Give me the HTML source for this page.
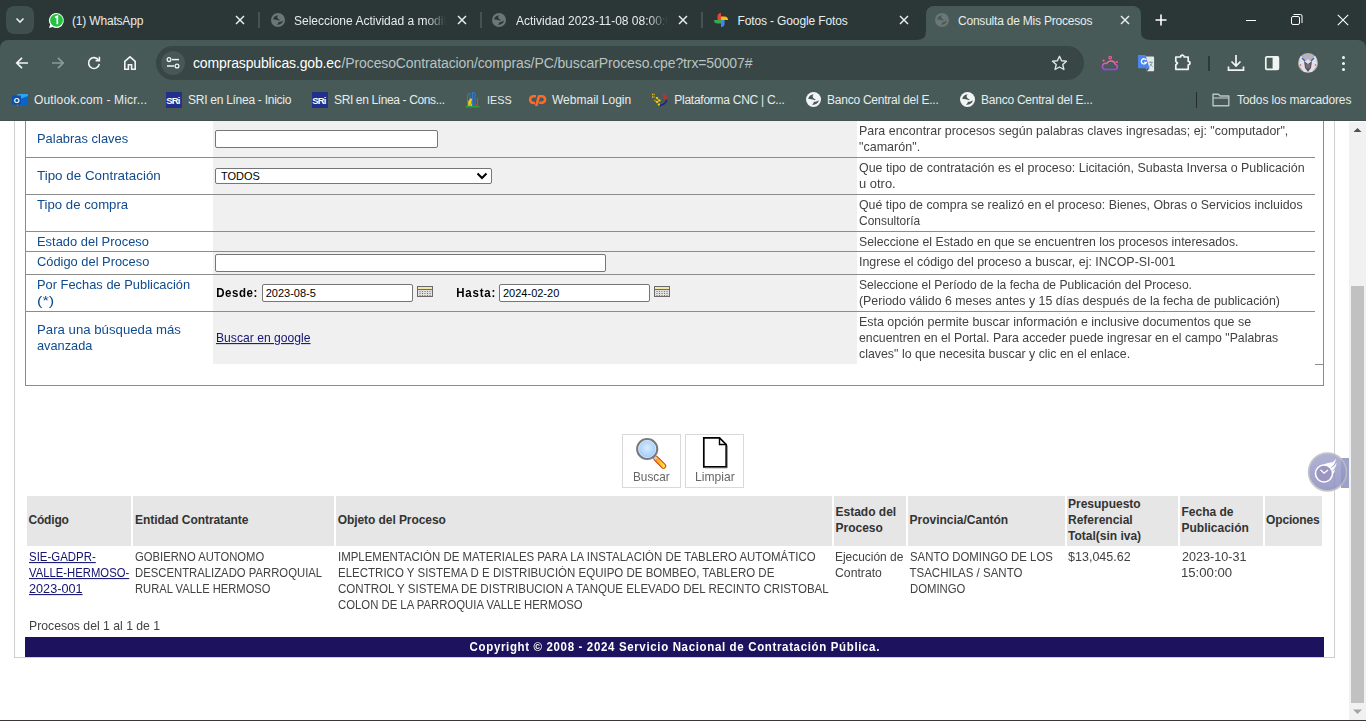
<!DOCTYPE html>
<html><head><meta charset="utf-8"><title>Consulta de Mis Procesos</title>
<style>

html,body{margin:0;padding:0;width:1366px;height:721px;overflow:hidden;background:#fff;}
body{position:relative;font-family:'Liberation Sans',sans-serif;}
.a{position:absolute;box-sizing:border-box;}
.t{position:absolute;white-space:nowrap;line-height:20px;font-family:'Liberation Sans',sans-serif;}
svg{position:absolute;overflow:visible;}

</style></head><body>
<div class="a" style="left:0px;top:0px;width:1366px;height:48px;background:#2b3736;"></div>
<div class="a" style="left:0px;top:40px;width:1366px;height:81px;background:#475a58;border-radius:8px 8px 0 0;"></div>
<div class="a" style="left:0px;top:120px;width:1366px;height:1px;background:#425250;"></div>
<div class="a" style="left:926px;top:6px;width:215px;height:40px;background:#475a58;border-radius:8px 8px 0 0;"></div>
<svg style="left:916px;top:32px" width="10" height="8"><path d="M0 8 Q10 8 10 0 L10 8 Z" fill="#475a58"/></svg>
<svg style="left:1141px;top:32px" width="10" height="8"><path d="M10 8 Q0 8 0 0 L0 8 Z" fill="#475a58"/></svg>
<div class="a" style="left:6px;top:6px;width:28px;height:28px;background:#3f4f4e;border-radius:8px;"></div>
<svg style="left:14px;top:14px" width="12" height="12"><path d="M2.5 4.5 L6 8 L9.5 4.5" stroke="#e8ecec" stroke-width="1.6" fill="none"/></svg>
<div class="a" style="left:258px;top:12px;width:2px;height:16px;background:#415451;"></div>
<div class="a" style="left:480px;top:12px;width:2px;height:16px;background:#415451;"></div>
<div class="a" style="left:701px;top:12px;width:2px;height:16px;background:#415451;"></div>
<svg style="left:235px;top:15px" width="10" height="10"><path d="M1 1 L9 9 M9 1 L1 9" stroke="#e8ecec" stroke-width="1.5" fill="none"/></svg>
<svg style="left:457px;top:15px" width="10" height="10"><path d="M1 1 L9 9 M9 1 L1 9" stroke="#e8ecec" stroke-width="1.5" fill="none"/></svg>
<svg style="left:678px;top:15px" width="10" height="10"><path d="M1 1 L9 9 M9 1 L1 9" stroke="#e8ecec" stroke-width="1.5" fill="none"/></svg>
<svg style="left:899px;top:15px" width="10" height="10"><path d="M1 1 L9 9 M9 1 L1 9" stroke="#e8ecec" stroke-width="1.5" fill="none"/></svg>
<svg style="left:1120px;top:15px" width="10" height="10"><path d="M1 1 L9 9 M9 1 L1 9" stroke="#e8ecec" stroke-width="1.5" fill="none"/></svg>
<svg style="left:271px;top:13px" width="14" height="14" viewBox="0 0 14 14"><circle cx="7" cy="7" r="7" fill="#6b7676"/><path d="M2.1 6.6 C2.4 4.2 4.3 2.4 7.3 2.2 C6.3 3 5.9 4.1 6.5 5.1 C7.1 6.1 8.3 6.6 9.2 7.4 C7.8 7.6 6.6 6.9 5.2 6.7 C4.2 6.6 3 6.6 2.1 6.6 Z" fill="#2b3736"/><path d="M5.6 11.9 C6.6 11.2 7.4 10.3 7.3 9.2 C8.8 9.3 10.3 8.6 11.9 7.6 C11.8 10 9.6 11.9 5.6 11.9 Z" fill="#2b3736"/></svg>
<svg style="left:492px;top:13px" width="14" height="14" viewBox="0 0 14 14"><circle cx="7" cy="7" r="7" fill="#6b7676"/><path d="M2.1 6.6 C2.4 4.2 4.3 2.4 7.3 2.2 C6.3 3 5.9 4.1 6.5 5.1 C7.1 6.1 8.3 6.6 9.2 7.4 C7.8 7.6 6.6 6.9 5.2 6.7 C4.2 6.6 3 6.6 2.1 6.6 Z" fill="#2b3736"/><path d="M5.6 11.9 C6.6 11.2 7.4 10.3 7.3 9.2 C8.8 9.3 10.3 8.6 11.9 7.6 C11.8 10 9.6 11.9 5.6 11.9 Z" fill="#2b3736"/></svg>
<svg style="left:935px;top:13px" width="14" height="14" viewBox="0 0 14 14"><circle cx="7" cy="7" r="7" fill="#6b7676"/><path d="M2.1 6.6 C2.4 4.2 4.3 2.4 7.3 2.2 C6.3 3 5.9 4.1 6.5 5.1 C7.1 6.1 8.3 6.6 9.2 7.4 C7.8 7.6 6.6 6.9 5.2 6.7 C4.2 6.6 3 6.6 2.1 6.6 Z" fill="#475a58"/><path d="M5.6 11.9 C6.6 11.2 7.4 10.3 7.3 9.2 C8.8 9.3 10.3 8.6 11.9 7.6 C11.8 10 9.6 11.9 5.6 11.9 Z" fill="#475a58"/></svg>
<svg style="left:48px;top:12px" width="17" height="17" viewBox="0 0 17 17"><path d="M8.5 1 A7.5 7.5 0 1 1 4.6 15 L1 16 L2.2 12.6 A7.5 7.5 0 0 1 8.5 1 Z" fill="#fff"/><circle cx="8.5" cy="8.3" r="6.4" fill="#25c03f"/><path d="M7 5.5 L9.3 4.3 L9.3 12.3" stroke="#fff" stroke-width="1.7" fill="none"/></svg>
<svg style="left:713px;top:12px" width="16" height="16" viewBox="0 0 16 16"><path d="M8 8 L8 1 A3.5 3.5 0 0 0 4.5 4.5 L4.5 8 Z" fill="#ea4335"/><path d="M8 8 L15 8 A3.5 3.5 0 0 0 11.5 4.5 L8 4.5 Z" fill="#fbbc04"/><path d="M8 8 L8 15 A3.5 3.5 0 0 0 11.5 11.5 L11.5 8 Z" fill="#4285f4"/><path d="M8 8 L1 8 A3.5 3.5 0 0 0 4.5 11.5 L8 11.5 Z" fill="#34a853"/></svg>
<svg style="left:1155px;top:14px" width="12" height="12"><path d="M6 0.5 V11.5 M0.5 6 H11.5" stroke="#ffffff" stroke-width="1.6"/></svg>
<div class="a" style="left:1246px;top:20px;width:10px;height:1px;background:#ffffff;"></div>
<svg style="left:1291px;top:14px" width="12" height="12"><rect x="0.5" y="2.5" width="8" height="8" rx="1.5" stroke="#fff" stroke-width="1" fill="none"/><path d="M2.5 0.5 H9.5 A1.5 1.5 0 0 1 11 2 V9" stroke="#fff" stroke-width="1" fill="none"/></svg>
<svg style="left:1337px;top:14px" width="12" height="12"><path d="M0.8 0.8 L11.2 11.2 M11.2 0.8 L0.8 11.2" stroke="#fff" stroke-width="1.1"/></svg>
<svg style="left:15px;top:56px" width="14" height="14"><path d="M13 7 H2 M7 1.8 L1.8 7 L7 12.2" stroke="#f2f4f4" stroke-width="1.7" fill="none"/></svg>
<svg style="left:51px;top:56px" width="14" height="14"><path d="M1 7 H12 M7 1.8 L12.2 7 L7 12.2" stroke="#8d9a99" stroke-width="1.7" fill="none"/></svg>
<svg style="left:87px;top:56px" width="14" height="14"><path d="M11.6 4.2 A5.4 5.4 0 1 0 12.3 8" stroke="#f2f4f4" stroke-width="1.6" fill="none"/><path d="M8.6 4.6 H12.4 V0.8" stroke="#f2f4f4" stroke-width="1.6" fill="none"/></svg>
<svg style="left:123px;top:55px" width="14" height="16"><path d="M1.8 14.2 V6.4 L7 1.9 L12.2 6.4 V14.2 H8.6 V9.8 H5.4 V14.2 Z" stroke="#f2f4f4" stroke-width="1.6" fill="none" stroke-linejoin="miter"/></svg>
<div class="a" style="left:156px;top:46px;width:928px;height:34px;background:#384645;border-radius:17px;"></div>
<div class="a" style="left:161px;top:51px;width:24px;height:24px;background:#475856;border-radius:12px;"></div>
<svg style="left:166px;top:57px" width="14" height="12"><circle cx="3" cy="2.6" r="1.9" stroke="#f2f4f4" stroke-width="1.3" fill="none"/><path d="M6 2.6 H13" stroke="#f2f4f4" stroke-width="1.5"/><circle cx="11" cy="9" r="1.9" stroke="#f2f4f4" stroke-width="1.3" fill="none"/><path d="M1 9 H8" stroke="#f2f4f4" stroke-width="1.5"/></svg>
<svg style="left:1051px;top:55px" width="17" height="16" viewBox="0 0 17 16"><path d="M8.5 1.3 L10.6 5.8 L15.5 6.3 L11.8 9.6 L12.9 14.5 L8.5 12 L4.1 14.5 L5.2 9.6 L1.5 6.3 L6.4 5.8 Z" stroke="#e0e6e5" stroke-width="1.4" fill="none" stroke-linejoin="round"/></svg>
<svg style="left:1100px;top:54px" width="20" height="18" viewBox="0 0 20 18"><defs><linearGradient id="wg" x1="0" y1="0" x2="0" y2="1"><stop offset="0" stop-color="#ff6a90"/><stop offset="1" stop-color="#9a40ff"/></linearGradient></defs><path d="M4.5 15.5 H14.8 A2.6 2.6 0 0 0 15.4 10.4 A4.8 4.8 0 0 0 6.6 9.6 A3 3 0 0 0 4.5 15.5 Z" stroke="url(#wg)" stroke-width="1.5" fill="none"/><circle cx="10.2" cy="3.6" r="1.3" stroke="#ff5aa0" stroke-width="1.1" fill="none"/><circle cx="3.6" cy="6.6" r="1.1" fill="#ff5aa0"/><circle cx="16.8" cy="8" r="1.1" fill="#ff5aa0"/></svg>
<svg style="left:1137px;top:54px" width="18" height="18" viewBox="0 0 18 18"><path d="M8 2.5 H16.3 A0.8 0.8 0 0 1 17.1 3.3 V16.5 A0.8 0.8 0 0 1 16.3 17.3 H10 Z" fill="#e6e8e8"/><path d="M1 1 H8.5 L12.5 14.2 H1.8 A0.8 0.8 0 0 1 1 13.4 Z" fill="#4a86ee"/><path d="M10 14.2 H12.5 L10 17.3 Z" fill="#2a4fb8"/><path d="M9.2 6 A2.6 2.6 0 1 0 9.4 8.3 H7.2" stroke="#fff" stroke-width="1.3" fill="none"/><path d="M11.8 8.3 H15.8 M13.8 7.3 V8.3 M12.3 12.8 C14 11.5 14.8 10 15 8.3 M13 9.8 C13.8 11 14.8 12 15.8 12.8" stroke="#6f8f9a" stroke-width="0.8" fill="none"/></svg>
<svg style="left:1174px;top:54px" width="18" height="18" viewBox="0 0 18 18"><path d="M1.8 3 H6.6 A1.8 1.8 0 0 1 10.2 3 H14.2 V7.3 A1.8 1.8 0 0 1 14.2 10.9 V15.3 H1.8 V10.9 L3.5 9.1 L1.8 7.3 Z" stroke="#f2f4f4" stroke-width="1.7" fill="none" stroke-linejoin="round"/></svg>
<div class="a" style="left:1208px;top:56px;width:2px;height:15px;background:#2e3a39;"></div>
<svg style="left:1227px;top:54px" width="18" height="18" viewBox="0 0 18 18"><path d="M9 1 V11.5 M4.5 7.5 L9 12 L13.5 7.5" stroke="#f2f4f4" stroke-width="1.7" fill="none"/><path d="M1.5 12.5 V16.2 H16.5 V12.5" stroke="#f2f4f4" stroke-width="1.7" fill="none"/></svg>
<svg style="left:1264px;top:55px" width="16" height="16" viewBox="0 0 16 16"><rect x="1.8" y="1.8" width="12.6" height="12.6" rx="1.2" stroke="#f2f4f4" stroke-width="1.7" fill="none"/><rect x="8.6" y="1.5" width="6" height="13" fill="#f2f4f4"/></svg>
<svg style="left:1298px;top:53px" width="20" height="20" viewBox="0 0 20 20"><defs><clipPath id="av"><circle cx="10" cy="10" r="10"/></clipPath></defs><g clip-path="url(#av)"><rect width="20" height="20" fill="#b9b2bc"/><path d="M2 2 L8 8 L10 6 L12 8 L18 2 L19 12 L14 19 H6 L1 12 Z" fill="#e6e0e6"/><path d="M6 8 L10 11 L14 8 L13 15 L10 19 L7 15 Z" fill="#5c5660"/><path d="M8 12 H12 M8 14 H12" stroke="#9a949c" stroke-width="0.8"/><path d="M4 5 L7 8" stroke="#2f6ec0" stroke-width="1.6"/><path d="M16 5 L13 8" stroke="#2f6ec0" stroke-width="1.6"/><circle cx="2.5" cy="12" r="0.8" fill="#c05050"/><circle cx="17.5" cy="12" r="0.8" fill="#c05050"/></g></svg>
<div class="a" style="left:1342px;top:56px;width:3px;height:3px;background:#f2f4f4;border-radius:2px;"></div>
<div class="a" style="left:1342px;top:62px;width:3px;height:3px;background:#f2f4f4;border-radius:2px;"></div>
<div class="a" style="left:1342px;top:68px;width:3px;height:3px;background:#f2f4f4;border-radius:2px;"></div>
<svg style="left:12px;top:92px" width="16" height="16" viewBox="0 0 16 16"><rect x="5" y="2" width="11" height="12" rx="1" fill="#28a8ea"/><path d="M5 8 L16 4 V14 H6 Z" fill="#0a64c8"/><rect x="0" y="3.5" width="9" height="9" rx="1" fill="#0f4fa8"/><text x="1.8" y="11" font-size="7.5" font-weight="700" font-family="Liberation Sans" fill="#fff">O</text></svg>
<svg style="left:166px;top:92px" width="16" height="16" viewBox="0 0 16 16"><rect width="16" height="16" fill="#23308a"/><text x="0.3" y="12" font-size="9.5" font-weight="700" font-family="Liberation Sans" fill="#fff" letter-spacing="-0.9">SRi</text></svg>
<svg style="left:312px;top:92px" width="16" height="16" viewBox="0 0 16 16"><rect width="16" height="16" fill="#23308a"/><text x="0.3" y="12" font-size="9.5" font-weight="700" font-family="Liberation Sans" fill="#fff" letter-spacing="-0.9">SRi</text></svg>
<svg style="left:465px;top:91px" width="15" height="17" viewBox="0 0 15 17"><path d="M2.5 15 V5 M5 15 V2.5 M7.5 15 V1.5 M10 15 V2.5 M12.5 15 V7" stroke="#2f7ee0" stroke-width="0.9" fill="none"/><path d="M2.5 5 Q2.5 1.5 5 2.5 M7.5 1.5 Q10 1.2 10 2.5" stroke="#2f7ee0" stroke-width="0.9" fill="none"/><path d="M4 15 V10.5 L6 9 L5.5 12 L6.5 15" stroke="#f2d010" stroke-width="1.6" fill="none"/><circle cx="5.5" cy="8.6" r="1" fill="#f2d010"/><path d="M8.5 15 V11 M10.5 15 V11.5" stroke="#2a60c0" stroke-width="1.3"/><path d="M9.5 13 L11 15 L12.5 13" fill="#e03030"/><path d="M0.5 15.8 H14.5" stroke="#22b030" stroke-width="1.2"/></svg>
<svg style="left:529px;top:93px" width="18" height="14" viewBox="0 0 18 14"><path d="M7 3.2 H4.5 A3.4 3.4 0 0 0 4.5 10 H6" stroke="#ff6a28" stroke-width="2.6" fill="none"/><path d="M7.2 13 L10 3.2 H12.8 A3.3 3.3 0 0 1 12.8 9.8 H10.2" stroke="#ff6a28" stroke-width="2.6" fill="none" stroke-linejoin="round"/></svg>
<svg style="left:651px;top:93px" width="17" height="14" viewBox="0 0 17 14"><path d="M1 1.5 H4 M1 4 H3.5 M5 4.5 L8 7 M3.5 7 L6.5 10 M6 9.5 L9 7 M7 12 L8.5 10.5" stroke="#e8c010" stroke-width="1.4" stroke-dasharray="1 0.6"/><circle cx="6" cy="5" r="1.1" fill="#f2cc10"/><circle cx="8.5" cy="7.5" r="1.1" fill="#f2cc10"/><circle cx="6" cy="8.8" r="1.1" fill="#f2cc10"/><circle cx="8" cy="11.5" r="1.1" fill="#f2cc10"/><path d="M11.5 1.5 C14 1 16 2.5 15.6 5 C15.3 6.5 14 7.2 13 7.4 C14 6 13.5 4 12 3.5 Z" fill="#d42a20"/><path d="M9 12.5 C12 12 15 9.5 15.8 6.8" stroke="#1c2a78" stroke-width="1.8" fill="none"/></svg>
<svg style="left:806px;top:92px" width="15" height="15" viewBox="0 0 14 14"><circle cx="7" cy="7" r="7" fill="#f2f4f4"/><path d="M2.1 6.6 C2.4 4.2 4.3 2.4 7.3 2.2 C6.3 3 5.9 4.1 6.5 5.1 C7.1 6.1 8.3 6.6 9.2 7.4 C7.8 7.6 6.6 6.9 5.2 6.7 C4.2 6.6 3 6.6 2.1 6.6 Z" fill="#475a58"/><path d="M5.6 11.9 C6.6 11.2 7.4 10.3 7.3 9.2 C8.8 9.3 10.3 8.6 11.9 7.6 C11.8 10 9.6 11.9 5.6 11.9 Z" fill="#475a58"/></svg>
<svg style="left:960px;top:92px" width="15" height="15" viewBox="0 0 14 14"><circle cx="7" cy="7" r="7" fill="#f2f4f4"/><path d="M2.1 6.6 C2.4 4.2 4.3 2.4 7.3 2.2 C6.3 3 5.9 4.1 6.5 5.1 C7.1 6.1 8.3 6.6 9.2 7.4 C7.8 7.6 6.6 6.9 5.2 6.7 C4.2 6.6 3 6.6 2.1 6.6 Z" fill="#475a58"/><path d="M5.6 11.9 C6.6 11.2 7.4 10.3 7.3 9.2 C8.8 9.3 10.3 8.6 11.9 7.6 C11.8 10 9.6 11.9 5.6 11.9 Z" fill="#475a58"/></svg>
<div class="a" style="left:1196px;top:92px;width:1px;height:16px;background:#222c2b;"></div>
<svg style="left:1212px;top:93px" width="18" height="14" viewBox="0 0 18 14"><path d="M1 1.2 H6.5 L8.2 3 H16.8 V12.8 H1 Z" stroke="#b9c3c2" stroke-width="1.4" fill="none" stroke-linejoin="round"/><path d="M1 5 H16.8" stroke="#b9c3c2" stroke-width="1.2"/></svg>
<div class="a" style="left:14px;top:121px;width:1px;height:537px;background:#cfcfcf;"></div>
<div class="a" style="left:1334px;top:121px;width:1px;height:537px;background:#cfcfcf;"></div>
<div class="a" style="left:14px;top:657px;width:1321px;height:1px;background:#cfcfcf;"></div>
<div class="a" style="left:25px;top:121px;width:1px;height:265px;background:#8c8c8c;"></div>
<div class="a" style="left:1323px;top:121px;width:1px;height:265px;background:#8c8c8c;"></div>
<div class="a" style="left:25px;top:385px;width:1299px;height:1px;background:#8c8c8c;"></div>
<div class="a" style="left:213px;top:121px;width:644px;height:243px;background:#f0f0f0;"></div>
<div class="a" style="left:25px;top:157px;width:1290px;height:1px;background:#8c8c8c;"></div>
<div class="a" style="left:25px;top:194px;width:1290px;height:1px;background:#8c8c8c;"></div>
<div class="a" style="left:25px;top:231px;width:1290px;height:1px;background:#8c8c8c;"></div>
<div class="a" style="left:25px;top:251px;width:1290px;height:1px;background:#8c8c8c;"></div>
<div class="a" style="left:25px;top:274px;width:1290px;height:1px;background:#8c8c8c;"></div>
<div class="a" style="left:25px;top:311px;width:1290px;height:1px;background:#8c8c8c;"></div>
<div class="a" style="left:1315px;top:364px;width:8px;height:1px;background:#8c8c8c;"></div>
<div class="a" style="left:215px;top:130px;width:223px;height:18px;background:#fff;border:1px solid #767676;border-radius:2px;"></div>
<div class="a" style="left:215px;top:168px;width:277px;height:16px;background:#fff;border:1px solid #767676;border-radius:2px;"></div>
<svg style="left:476px;top:172px" width="12" height="8"><path d="M1.5 1.5 L6 6 L10.5 1.5" stroke="#000" stroke-width="2" fill="none"/></svg>
<div class="a" style="left:215px;top:254px;width:391px;height:18px;background:#fff;border:1px solid #767676;border-radius:2px;"></div>
<div class="a" style="left:262px;top:284px;width:151px;height:18px;background:#fff;border:1px solid #767676;border-radius:2px;"></div>
<div class="a" style="left:499px;top:284px;width:151px;height:18px;background:#fff;border:1px solid #767676;border-radius:2px;"></div>
<svg style="left:417px;top:286px" width="16" height="11" viewBox="0 0 16 11"><rect x="0.5" y="0.5" width="15" height="10" fill="#e0e0e0" stroke="#6a6a6a"/><rect x="1" y="1" width="14" height="2" fill="#f3e7a8"/><path d="M1 3.5 H15" stroke="#6a6a6a"/><path d="M3 5 V10 M5.5 5 V10 M8 5 V10 M10.5 5 V10" stroke="#777" stroke-width="1" stroke-dasharray="1 1"/><path d="M13 5 V10" stroke="#d04040" stroke-dasharray="1 1"/></svg>
<svg style="left:654px;top:286px" width="16" height="11" viewBox="0 0 16 11"><rect x="0.5" y="0.5" width="15" height="10" fill="#e0e0e0" stroke="#6a6a6a"/><rect x="1" y="1" width="14" height="2" fill="#f3e7a8"/><path d="M1 3.5 H15" stroke="#6a6a6a"/><path d="M3 5 V10 M5.5 5 V10 M8 5 V10 M10.5 5 V10" stroke="#777" stroke-width="1" stroke-dasharray="1 1"/><path d="M13 5 V10" stroke="#d04040" stroke-dasharray="1 1"/></svg>
<div class="a" style="left:622px;top:434px;width:59px;height:54px;background:#fff;border:1px solid #d9d9d9;"></div>
<div class="a" style="left:685px;top:434px;width:59px;height:54px;background:#fff;border:1px solid #d9d9d9;"></div>
<svg style="left:634px;top:436px" width="34" height="34" viewBox="0 0 34 34"><defs><radialGradient id="lg" cx="0.5" cy="0.45" r="0.6"><stop offset="0" stop-color="#d8ecff"/><stop offset="0.7" stop-color="#a8d0fa"/><stop offset="1" stop-color="#5a9aee"/></radialGradient><linearGradient id="hg" x1="0" y1="0" x2="1" y2="0"><stop offset="0" stop-color="#ff9a10"/><stop offset="1" stop-color="#ffe040"/></linearGradient></defs><path d="M22 22.5 L29.5 30" stroke="#d03a10" stroke-width="5.4" stroke-linecap="round"/><path d="M22 22.5 L29.5 30" stroke="url(#hg)" stroke-width="3.6" stroke-linecap="round"/><path d="M20.5 21 L22.5 23" stroke="#c8d0d8" stroke-width="3"/><circle cx="13.2" cy="13" r="10" fill="url(#lg)" stroke="#7a7a7a" stroke-width="2.2"/><circle cx="13.2" cy="13" r="8.6" fill="none" stroke="#e8f0ff" stroke-width="0.7"/></svg>
<svg style="left:702px;top:436px" width="28" height="34" viewBox="0 0 28 34"><path d="M1.8 1.8 H17.5 L24.2 8.5 V30.8 H1.8 Z" fill="#fff" stroke="#000" stroke-width="1.7" stroke-linejoin="miter"/><path d="M17.5 1.8 V8.5 H24.2" fill="none" stroke="#000" stroke-width="1.4"/><path d="M2.8 31.8 H25.2 V9.5" stroke="#666" stroke-width="0.9" fill="none"/></svg>
<div class="a" style="left:27px;top:496px;width:104px;height:50px;background:#e6e6e6;"></div>
<div class="a" style="left:133px;top:496px;width:201px;height:50px;background:#e6e6e6;"></div>
<div class="a" style="left:336px;top:496px;width:496px;height:50px;background:#e6e6e6;"></div>
<div class="a" style="left:834px;top:496px;width:72px;height:50px;background:#e6e6e6;"></div>
<div class="a" style="left:908px;top:496px;width:157px;height:50px;background:#e6e6e6;"></div>
<div class="a" style="left:1067px;top:496px;width:111px;height:50px;background:#e6e6e6;"></div>
<div class="a" style="left:1180px;top:496px;width:83px;height:50px;background:#e6e6e6;"></div>
<div class="a" style="left:1265px;top:496px;width:57px;height:50px;background:#e6e6e6;"></div>
<div class="a" style="left:25px;top:637px;width:1299px;height:20px;background:#1d125e;"></div>
<div class="a" style="left:1341px;top:458px;width:8px;height:30px;background:#9497c4;opacity:0.9;"></div>
<svg style="left:1307px;top:452px;opacity:0.85" width="40" height="40" viewBox="0 0 40 40"><defs><linearGradient id="cg" x1="0" y1="0" x2="0" y2="1"><stop offset="0" stop-color="#a4a6cc"/><stop offset="1" stop-color="#8a8dc0"/></linearGradient></defs><circle cx="20.5" cy="20" r="19" fill="url(#cg)" stroke="#bdbdbd" stroke-width="1.6"/><circle cx="17" cy="21.5" r="8.5" fill="#8a84b4" stroke="#fff" stroke-width="1.5"/><path d="M13.5 17.8 L17 21.2 L21 18" stroke="#fff" stroke-width="1.3" fill="none"/><path d="M16.5 12.5 C20 10.5 23 11.5 26 9.5 C24.5 12.5 22 13.5 19 14 Z" fill="#fff"/><path d="M21 13.5 C24.5 12 27 10 28.5 6.5 C29 10.5 27 13.5 23.5 15.5 Z" fill="#fff"/><path d="M24 16 C26.5 15 28.5 13 29.5 10.5 C29.5 14 28 16.5 25.5 18.5 Z" fill="#fff"/><path d="M25 19.5 C26.5 19 27.5 18 28 16.5 C28 19 27 21 25.5 22.5 Z" fill="#fff"/></svg>
<div class="a" style="left:1349px;top:122px;width:17px;height:598px;background:#f1f1f1;"></div>
<div class="a" style="left:1351px;top:286px;width:13px;height:417px;background:#c1c1c1;"></div>
<svg style="left:1353px;top:127px" width="9" height="6"><path d="M0.5 5 L4.5 1 L8.5 5 Z" fill="#505050"/></svg>
<svg style="left:1353px;top:709px" width="9" height="6"><path d="M0 0.5 L4.5 5 L9 0.5 Z" fill="#a3a3a3"/></svg>
<div class="a" style="left:0px;top:720px;width:1366px;height:1px;background:#3b3535;"></div>
<div class="t" style="left:72px;top:11px;font-size:12px;font-weight:400;color:#e8ecec;letter-spacing:-0.182px;">(1) WhatsApp</div>
<div class="t" style="left:294px;top:11px;font-size:12px;font-weight:400;color:#e8ecec;width:152px;overflow:hidden;-webkit-mask-image:linear-gradient(90deg,#000 132px,transparent 152px);">Seleccione Actividad a modificar</div>
<div class="t" style="left:516px;top:11px;font-size:12px;font-weight:400;color:#e8ecec;width:152px;overflow:hidden;-webkit-mask-image:linear-gradient(90deg,#000 132px,transparent 152px);">Actividad 2023-11-08 08:00:00</div>
<div class="t" style="left:737.5px;top:11px;font-size:12px;font-weight:400;color:#e8ecec;letter-spacing:-0.132px;">Fotos - Google Fotos</div>
<div class="t" style="left:958px;top:11px;font-size:12px;font-weight:400;color:#e8ecec;letter-spacing:-0.217px;">Consulta de Mis Procesos</div>
<div class="t" style="left:193px;top:53px;font-size:14px;font-weight:400;color:#ffffff;letter-spacing:-0.143px;">compraspublicas.gob.ec</div>
<div class="t" style="left:341.5px;top:53px;font-size:14px;font-weight:400;color:#b9c3c2;letter-spacing:-0.11px;">/ProcesoContratacion/compras/PC/buscarProceso.cpe?trx=50007#</div>
<div class="t" style="left:34px;top:90px;font-size:12px;font-weight:400;color:#e8ecec;letter-spacing:0.15px;">Outlook.com - Micr...</div>
<div class="t" style="left:188px;top:90px;font-size:12px;font-weight:400;color:#e8ecec;letter-spacing:-0.27px;">SRI en Línea - Inicio</div>
<div class="t" style="left:334px;top:90px;font-size:12px;font-weight:400;color:#e8ecec;letter-spacing:-0.367px;">SRI en Línea - Cons...</div>
<div class="t" style="left:487px;top:90px;font-size:10.8px;font-weight:400;color:#e8ecec;">IESS</div>
<div class="t" style="left:552px;top:90px;font-size:12px;font-weight:400;color:#e8ecec;">Webmail Login</div>
<div class="t" style="left:674.3px;top:90px;font-size:12px;font-weight:400;color:#e8ecec;letter-spacing:-0.265px;">Plataforma CNC | C...</div>
<div class="t" style="left:827px;top:90px;font-size:12px;font-weight:400;color:#e8ecec;letter-spacing:-0.238px;">Banco Central del E...</div>
<div class="t" style="left:981px;top:90px;font-size:12px;font-weight:400;color:#e8ecec;letter-spacing:-0.238px;">Banco Central del E...</div>
<div class="t" style="left:1237px;top:90px;font-size:12px;font-weight:400;color:#e8ecec;letter-spacing:-0.158px;">Todos los marcadores</div>
<div class="t" style="left:37px;top:129px;font-size:11.5px;font-weight:400;color:#0f4b8f;transform:scale(1.1235,1.06);transform-origin:0 14px;">Palabras claves</div>
<div class="t" style="left:37px;top:166px;font-size:11.5px;font-weight:400;color:#0f4b8f;transform:scale(1.1642,1.06);transform-origin:0 14px;">Tipo de Contratación</div>
<div class="t" style="left:37px;top:194.5px;font-size:11.5px;font-weight:400;color:#0f4b8f;transform:scale(1.1475,1.06);transform-origin:0 14px;">Tipo de compra</div>
<div class="t" style="left:37px;top:231.5px;font-size:11.5px;font-weight:400;color:#0f4b8f;transform:scale(1.123,1.06);transform-origin:0 14px;">Estado del Proceso</div>
<div class="t" style="left:37px;top:252px;font-size:11.5px;font-weight:400;color:#0f4b8f;transform:scale(1.1188,1.06);transform-origin:0 14px;">Código del Proceso</div>
<div class="t" style="left:37px;top:275px;font-size:11.5px;font-weight:400;color:#0f4b8f;transform:scale(1.119,1.06);transform-origin:0 14px;">Por Fechas de Publicación</div>
<div class="t" style="left:37px;top:291px;font-size:11.5px;font-weight:400;color:#0f4b8f;transform:scale(1.4167,1.06);transform-origin:0 14px;">(*)</div>
<div class="t" style="left:37px;top:320px;font-size:11.5px;font-weight:400;color:#0f4b8f;transform:scale(1.148,1.06);transform-origin:0 14px;">Para una búsqueda más</div>
<div class="t" style="left:37px;top:336px;font-size:11.5px;font-weight:400;color:#0f4b8f;transform:scale(1.112,1.06);transform-origin:0 14px;">avanzada</div>
<div class="t" style="left:859px;top:121px;font-size:11.5px;font-weight:400;color:#424242;transform:scale(1.0819,1.06);transform-origin:0 14px;">Para encontrar procesos según palabras claves ingresadas; ej: &quot;computador&quot;,</div>
<div class="t" style="left:859px;top:137px;font-size:11.5px;font-weight:400;color:#424242;transform:scale(1.0893,1.06);transform-origin:0 14px;">&quot;camarón&quot;.</div>
<div class="t" style="left:859px;top:158px;font-size:11.5px;font-weight:400;color:#424242;transform:scale(1.0808,1.06);transform-origin:0 14px;">Que tipo de contratación es el proceso: Licitación, Subasta Inversa o Publicación</div>
<div class="t" style="left:859px;top:174px;font-size:11.5px;font-weight:400;color:#424242;transform:scale(1.125,1.06);transform-origin:0 14px;">u otro.</div>
<div class="t" style="left:859px;top:195px;font-size:11.5px;font-weight:400;color:#424242;transform:scale(1.076,1.06);transform-origin:0 14px;">Qué tipo de compra se realizó en el proceso: Bienes, Obras o Servicios incluidos</div>
<div class="t" style="left:859px;top:211px;font-size:11.5px;font-weight:400;color:#424242;transform:scale(1.039,1.06);transform-origin:0 14px;">Consultoría</div>
<div class="t" style="left:859px;top:231.5px;font-size:11.5px;font-weight:400;color:#424242;transform:scale(1.0676,1.06);transform-origin:0 14px;">Seleccione el Estado en que se encuentren los procesos interesados.</div>
<div class="t" style="left:859px;top:252px;font-size:11.5px;font-weight:400;color:#424242;transform:scale(1.0808,1.06);transform-origin:0 14px;">Ingrese el código del proceso a buscar, ej: INCOP-SI-001</div>
<div class="t" style="left:859px;top:275px;font-size:11.5px;font-weight:400;color:#424242;transform:scale(1.0522,1.06);transform-origin:0 14px;">Seleccione el Período de la fecha de Publicación del Proceso.</div>
<div class="t" style="left:859px;top:291px;font-size:11.5px;font-weight:400;color:#424242;transform:scale(1.076,1.06);transform-origin:0 14px;">(Periodo válido 6 meses antes y 15 días después de la fecha de publicación)</div>
<div class="t" style="left:859px;top:312px;font-size:11.5px;font-weight:400;color:#424242;transform:scale(1.0818,1.06);transform-origin:0 14px;">Esta opción permite buscar información e inclusive documentos que se</div>
<div class="t" style="left:859px;top:328px;font-size:11.5px;font-weight:400;color:#424242;transform:scale(1.0689,1.06);transform-origin:0 14px;">encuentren en el Portal. Para acceder puede ingresar en el campo &quot;Palabras</div>
<div class="t" style="left:859px;top:344px;font-size:11.5px;font-weight:400;color:#424242;transform:scale(1.0754,1.06);transform-origin:0 14px;">claves&quot; lo que necesita buscar y clic en el enlace.</div>
<div class="t" style="left:216.2px;top:283px;font-size:11.5px;font-weight:700;color:#000;letter-spacing:0.56px;transform:scale(1,1.06);transform-origin:0 14px;">Desde:</div>
<div class="t" style="left:456.2px;top:283px;font-size:11.5px;font-weight:700;color:#000;letter-spacing:0.8px;transform:scale(1,1.06);transform-origin:0 14px;">Hasta:</div>
<div class="t" style="left:265.7px;top:283px;font-size:11px;font-weight:400;color:#000;">2023-08-5</div>
<div class="t" style="left:503px;top:283px;font-size:11px;font-weight:400;color:#000;">2024-02-20</div>
<div class="t" style="left:220.9px;top:166px;font-size:11px;font-weight:400;color:#000;">TODOS</div>
<div class="t" style="left:216px;top:328px;font-size:11.5px;font-weight:400;color:#141472;transform:scale(1.0562,1.06);transform-origin:0 14px;text-decoration:underline;">Buscar en google</div>
<div class="t" style="left:633.4px;top:466.5px;font-size:11.5px;font-weight:400;color:#666;transform:scale(1.0222,1.06);transform-origin:0 14px;">Buscar</div>
<div class="t" style="left:694.5px;top:466.5px;font-size:11.5px;font-weight:400;color:#666;transform:scale(1.0526,1.06);transform-origin:0 14px;">Limpiar</div>
<div class="t" style="left:28.4px;top:510px;font-size:12px;font-weight:700;color:#333333;letter-spacing:-0.16px;">Código</div>
<div class="t" style="left:135.1px;top:510px;font-size:12px;font-weight:700;color:#333333;letter-spacing:-0.072px;">Entidad Contratante</div>
<div class="t" style="left:337.7px;top:510px;font-size:12px;font-weight:700;color:#333333;letter-spacing:-0.071px;">Objeto del Proceso</div>
<div class="t" style="left:835.5px;top:502px;font-size:12px;font-weight:700;color:#333333;">Estado del</div>
<div class="t" style="left:835.5px;top:518px;font-size:12px;font-weight:700;color:#333333;">Proceso</div>
<div class="t" style="left:909.5px;top:510px;font-size:12px;font-weight:700;color:#333333;">Provincia/Cantón</div>
<div class="t" style="left:1068px;top:494px;font-size:12px;font-weight:700;color:#333333;">Presupuesto</div>
<div class="t" style="left:1068px;top:510px;font-size:12px;font-weight:700;color:#333333;">Referencial</div>
<div class="t" style="left:1068px;top:526px;font-size:12px;font-weight:700;color:#333333;">Total(sin iva)</div>
<div class="t" style="left:1181.5px;top:502px;font-size:12px;font-weight:700;color:#333333;">Fecha de</div>
<div class="t" style="left:1181.5px;top:518px;font-size:12px;font-weight:700;color:#333333;">Publicación</div>
<div class="t" style="left:1266px;top:510px;font-size:12px;font-weight:700;color:#333333;letter-spacing:-0.143px;">Opciones</div>
<div class="t" style="left:28.7px;top:547px;font-size:11.5px;font-weight:400;color:#141472;transform:scale(0.9955,1.06);transform-origin:0 14px;text-decoration:underline;">SIE-GADPR-</div>
<div class="t" style="left:28.7px;top:563px;font-size:11.5px;font-weight:400;color:#141472;transform:scale(0.9824,1.06);transform-origin:0 14px;text-decoration:underline;">VALLE-HERMOSO-</div>
<div class="t" style="left:28.7px;top:579px;font-size:11.5px;font-weight:400;color:#141472;transform:scale(1.1021,1.06);transform-origin:0 14px;text-decoration:underline;">2023-001</div>
<div class="t" style="left:134.8px;top:547px;font-size:11.5px;font-weight:400;color:#424242;transform:scale(0.9788,1.06);transform-origin:0 14px;">GOBIERNO AUTONOMO</div>
<div class="t" style="left:134.8px;top:563px;font-size:11.5px;font-weight:400;color:#424242;transform:scale(0.9837,1.06);transform-origin:0 14px;">DESCENTRALIZADO PARROQUIAL</div>
<div class="t" style="left:134.8px;top:579px;font-size:11.5px;font-weight:400;color:#424242;transform:scale(0.9727,1.06);transform-origin:0 14px;">RURAL VALLE HERMOSO</div>
<div class="t" style="left:337.5px;top:547px;font-size:11.5px;font-weight:400;color:#424242;transform:scale(0.9956,1.06);transform-origin:0 14px;">IMPLEMENTACIÓN DE MATERIALES PARA LA INSTALACIÓN DE TABLERO AUTOMÁTICO</div>
<div class="t" style="left:337.5px;top:563px;font-size:11.5px;font-weight:400;color:#424242;transform:scale(1.0002,1.06);transform-origin:0 14px;">ELECTRICO Y SISTEMA D E DISTRIBUCIÓN EQUIPO DE BOMBEO, TABLERO DE</div>
<div class="t" style="left:337.5px;top:579px;font-size:11.5px;font-weight:400;color:#424242;transform:scale(1.0047,1.06);transform-origin:0 14px;">CONTROL Y SISTEMA DE DISTRIBUCION A TANQUE ELEVADO DEL RECINTO CRISTOBAL</div>
<div class="t" style="left:337.5px;top:595px;font-size:11.5px;font-weight:400;color:#424242;transform:scale(0.9859,1.06);transform-origin:0 14px;">COLON DE LA PARROQUIA VALLE HERMOSO</div>
<div class="t" style="left:835.2px;top:547px;font-size:11.5px;font-weight:400;color:#424242;transform:scale(1.0379,1.06);transform-origin:0 14px;">Ejecución de</div>
<div class="t" style="left:835.2px;top:563px;font-size:11.5px;font-weight:400;color:#424242;transform:scale(1.0636,1.06);transform-origin:0 14px;">Contrato</div>
<div class="t" style="left:909.5px;top:547px;font-size:11.5px;font-weight:400;color:#424242;transform:scale(0.991,1.06);transform-origin:0 14px;">SANTO DOMINGO DE LOS</div>
<div class="t" style="left:909.5px;top:563px;font-size:11.5px;font-weight:400;color:#424242;transform:scale(1.0,1.06);transform-origin:0 14px;">TSACHILAS / SANTO</div>
<div class="t" style="left:909.5px;top:579px;font-size:11.5px;font-weight:400;color:#424242;transform:scale(0.9857,1.06);transform-origin:0 14px;">DOMINGO</div>
<div class="t" style="left:1068.2px;top:547px;font-size:11.5px;font-weight:400;color:#424242;transform:scale(1.0897,1.06);transform-origin:0 14px;">$13,045.62</div>
<div class="t" style="left:1181.6px;top:547px;font-size:11.5px;font-weight:400;color:#424242;transform:scale(1.0966,1.06);transform-origin:0 14px;">2023-10-31</div>
<div class="t" style="left:1180.6px;top:563px;font-size:11.5px;font-weight:400;color:#424242;transform:scale(1.1432,1.06);transform-origin:0 14px;">15:00:00</div>
<div class="t" style="left:28.7px;top:616px;font-size:11.5px;font-weight:400;color:#424242;transform:scale(1.0626,1.06);transform-origin:0 14px;">Procesos del 1 al 1 de 1</div>
<div class="t" style="left:469.6px;top:637px;font-size:11.5px;font-weight:700;color:#ffffff;letter-spacing:0.648px;transform:scale(1,1.06);transform-origin:0 14px;">Copyright © 2008 - 2024 Servicio Nacional de Contratación Pública.</div>
</body></html>
